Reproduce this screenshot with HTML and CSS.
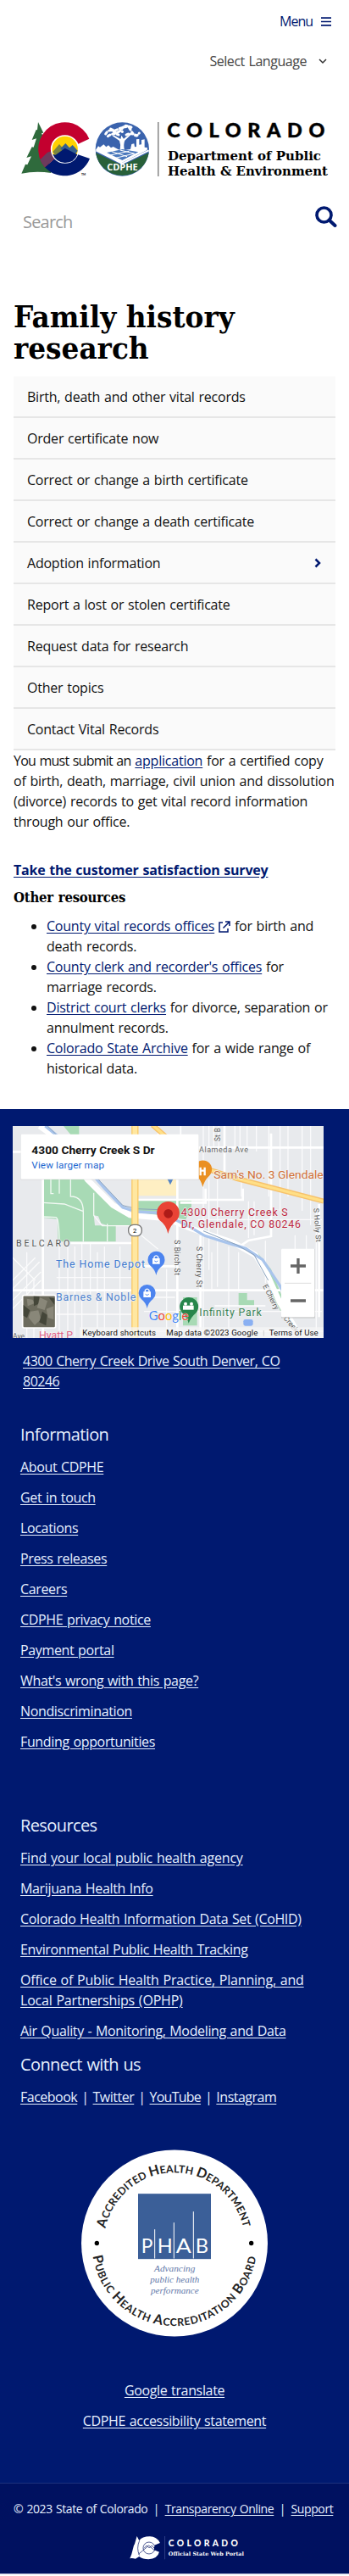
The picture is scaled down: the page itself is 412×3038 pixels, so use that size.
FILE: index.html
```html
<!DOCTYPE html>
<html lang="en">
<head>
<meta charset="utf-8">
<meta name="viewport" content="width=device-width, initial-scale=1">
<title>Family history research</title>
<link rel="stylesheet" href="styles.css">
</head>
<body>
<header class="site-header">
  <a class="menu">Menu
    <svg width="12" height="11" viewBox="0 0 12 11"><path d="M0 1.2h12M0 5.5h12M0 9.8h12" stroke="#001970" stroke-width="1.7"/></svg>
  </a>
  <div class="language">Select Language
    <svg width="10" height="7" viewBox="0 0 10 7"><path d="M1 1l4 4 4-4" fill="none" stroke="#333" stroke-width="1.5"/></svg>
  </div>
  <svg class="logo" viewBox="75 432 1092 192">
    <path fill="#2f6a3c" d="M135 432l19 38-7 1 14 30 20 111q-55-8-105 2l14-33 7 2 14-30-17 5 19-38 6 1 10-31-16 5 15-36 4 1z"/>
    <path fill="#001970" d="M230 528L159 592A96 96 0 0 0 318 561L272 545z"/>
    <path fill="#c3002f" d="M316 491A94 96 0 1 0 159 592L230 528 274 511z"/>
    <path fill="#6d3a5d" d="M142 565l26-26 16-5q3 14 12 24l-37 34q-12-14-17-27z"/>
    <circle cx="230" cy="528" r="48" fill="#ffd100" stroke="#fff" stroke-width="5"/>
    <path fill="#7a8540" d="M187 537l23-27 24 28-28 24z"/>
    <path fill="#35608f" d="M214 526l18-19 14 16 11-10 18 20-8 13-40-8z"/>
    <path fill="#001970" d="M187 545l10 3 33-24 44 23q-11 29-44 29-33-3-43-31z"/>
    <text x="288" y="620" font-family="Lato" font-size="10" font-weight="700">TM</text>
    <circle cx="433" cy="528" r="95" fill="#3a63ad"/>
    <path fill="#286039" d="M339 540l94 45 94-45a95 95 0 0 1-188 0z"/>
    <path fill="#fff" d="M339 530l9-13 6 4 13-10 9 9 8-6 9 9 8-4 18 10 6 1q4-17-2-32l-25-17 4-3 25 14 3-13 8 12 28-22 3 3-27 25q-6 15-1 34l21-3 4-18 9-2 2 12 6-1v-26l10-1v20l8-1v-16l11-2v28l10 2-1 8-94 47z"/>
    <path fill="#4a78bd" d="M378 540l56-12 56 10-57 29z"/>
    <path fill="none" stroke="#fff" stroke-width="3" d="M385 550l72-15M405 560l72-17M395 536l55 18M425 531l50 12"/>
    <path fill="none" stroke="#fff" stroke-width="6" d="M340 532l93 47 94-47"/>
    <path fill="none" stroke="#fff" stroke-width="9" stroke-linecap="round" stroke-dasharray="8 9" d="M374 474q12-20 28-9t31-11 31 8 29 9M382 482q20-14 38-5M447 477q20-9 38 3M392 456q14 8 22 3t29-10 28 8"/>
    <circle cx="433" cy="466" r="5" fill="#fff"/>
    <text x="379" y="603" font-family="Open Sans" font-size="30" font-weight="700" fill="#fff" textLength="109" lengthAdjust="spacingAndGlyphs">CDPHE</text>
    <path d="M560.500 432v192" stroke="#777" stroke-width="4"/>
    <text class="wordmark" x="592" y="485" font-size="70" textLength="558">COLORADO</text>
    <text class="slab" x="594" y="568" font-size="47" textLength="543" lengthAdjust="spacingAndGlyphs">Department of Public</text>
    <text class="slab" x="594" y="622" font-size="47" textLength="567" lengthAdjust="spacingAndGlyphs">Health &amp; Environment</text>
  </svg>
  <div class="search"><span>Search</span>
    <svg width="26" height="25" viewBox="0 0 26 25"><circle cx="10.500" cy="10.500" r="8.500" fill="none" stroke="#001970" stroke-width="3.600"/><path d="M16.500 16.500l7 6.500" stroke="#001970" stroke-width="4" stroke-linecap="round"/></svg>
  </div>
</header>
<main>
  <h1>Family history<br>research</h1>
  <nav class="side-nav">
    <a>Birth, death and other vital records</a>
    <a>Order certificate now</a>
    <a>Correct or change a birth certificate</a>
    <a>Correct or change a death certificate</a>
    <a>Adoption information <svg width="8" height="12" viewBox="0 0 8 12"><path d="M1.500 1.500L6 6l-4.500 4.500" fill="none" stroke="#001970" stroke-width="2.500"/></svg></a>
    <a>Report a lost or stolen certificate</a>
    <a>Request data for research</a>
    <a>Other topics</a>
    <a>Contact Vital Records</a>
  </nav>
  <p class="intro"><span class="snug">You must submit an</span> <a>application</a> for a certified copy<br>of birth, death, marriage, civil union and dissolution<br>(divorce) records to get vital record information<br>through our office.</p>
  <p class="survey"><a>Take the customer satisfaction survey</a></p>
  <h2>Other resources</h2>
  <ul class="resources">
    <li><a>County vital records offices</a> <svg width="14" height="14" viewBox="0 0 14 14"><path d="M5 2H1v11h10V9M8 1h5v5M13 1L5.500 8.500" fill="none" stroke="#001970" stroke-width="1.500"/></svg> for birth and<br>death records.</li>
    <li><a>County clerk and recorder's offices</a> for<br>marriage records.</li>
    <li><a>District court clerks</a> for divorce, separation or<br>annulment records.</li>
    <li><a>Colorado State Archive</a> for a wide range of<br>historical data.</li>
  </ul>
</main>
<footer class="site-footer">
  <svg class="map" viewBox="45 54 1101 750">
    <rect x="45" y="54" width="1101" height="750" fill="#e8eaed"/>
    <g fill="#a8dab5">
      <path d="M150 243h170l20 30 70 70 60 40v22h-60v58H205v-80l-55-5zM225 54h55v30h-30zM480 318h198v22l-20 45-80-12-98-15zM845 645h30v25h25v20h-55zM648 660h50v100h-50zM910 500l50 60 40 100-6 50-30-60-20-90z"/>
    </g>
    <path fill="#feefc3" d="M487 243h140v58H487z"/>
    <path fill="#e8eaed" d="M332 370l16 3 10 25 22 8h-44z"/>
    <g fill="none" stroke="#fff" stroke-width="4" opacity=".85">
      <path d="M720 54v750M740 54v90M757 54v90M775 54v90M832 54v90M850 54v90M875 54v90M908 54v90M952 54v250M992 54v300M1020 54v250M1070 54v300M1100 54v350M740 243v320M770 243v380M855 243v60M880 320v130M900 320v120M750 500v130M810 480v320M845 500v140M1045 440v50M1085 440v50M1120 350v450M940 460v150M210 480v320M240 480v320M265 480v320M290 470v334M320 470v180M345 500v304M370 480v324M425 480v324M590 560v240M95 500v304M120 600v204M380 400v62M180 243v50h10M210 243v50M250 243v60q45 0 45 55v105M153 325l75 5 65 25M153 375l45 2q12 3 12 90M332 290v80l30 37h110"/>
      <path d="M45 600l80-80M45 630l95-95M45 670l100-100M45 700l100-100M45 520l80 80M200 720h270M200 590h270M500 440l60 50M510 710h120M700 710h440M700 385h440M500 660h120"/>
    </g>
    <g fill="none" stroke="#fff" stroke-width="8">
      <path d="M250 468h230M45 635h1100M480 315h380v-40M628 243v560M960 80v364l-80 15-30 20M795 54v190M710 440v364M728 275v50h-90M152 243v561M45 145h30M700 130h446M490 550h130M1130 330v400"/>
      <path d="M545 780h600M760 690h180M560 54v30M640 54v30" stroke-width="5"/>
    </g>
    <path fill="none" stroke="#fff" stroke-width="20" d="M140 54l70 50 100 140 90 90 60 35 130 12 85 35 150 50 80 45 40 65 45 100 60 100"/>
    <path fill="none" stroke="#a8c4ec" stroke-width="10" d="M160 54l50 40 90 100 70 80 65 68 50 15 90 5 90 45 60 35 145 45 60 40 60 90 60 110"/>
    <path fill="none" stroke="#8aa2bd" stroke-width="3" d="M165 50l150 150 40 50 80 85 50 12 80 3M720 425l120 50 60 35 50 90"/>
    <path fill="none" stroke="#f9ca69" stroke-width="25" d="M478 54v750"/>
    <path fill="none" stroke="#ffe7a0" stroke-width="17" d="M478 54v750"/>
    <path fill="none" stroke="#f7c26b" stroke-width="18" d="M540 50l48 42M740 208l100 32 306 80"/>
    <path fill="none" stroke="#ffdf86" stroke-width="10" d="M540 50l48 42M740 208l100 32 306 80"/>
    <rect x="455" y="403" width="47" height="40" rx="18" fill="#fff" stroke="#777" stroke-width="4"/>
    <text x="471" y="432" font-size="23">2</text>
    <g class="halo">
      <text x="705" y="146" font-size="27" fill="#666" textLength="174">Alameda Ave</text>
      <text x="57" y="481" font-size="32" fill="#555" textLength="190">BELCARO</text>
      <text transform="translate(781 108) rotate(-90)" font-size="25" fill="#555">St</text>
      <text transform="translate(781 76) rotate(-90)" font-size="25" fill="#555">B</text>
      <text transform="translate(618 457) rotate(90)" font-size="26" fill="#555" textLength="125">S Birch St</text>
      <text transform="translate(696 480) rotate(90)" font-size="26" fill="#555" textLength="145">S Cherry St</text>
      <text transform="translate(1111 345) rotate(86)" font-size="26" fill="#555" textLength="120">S Holly St</text>
      <text transform="translate(930 620) rotate(63)" font-size="26" fill="#555">E Cherry</text>
      <text transform="translate(1003 735) rotate(50)" font-size="26" fill="#555">Creek</text>
      <text x="757" y="240" font-size="37" fill="#d17036" textLength="388" lengthAdjust="spacingAndGlyphs">Sam's No. 3 Glendale</text>
      <text x="641" y="372" font-size="37" fill="#bd2740" textLength="378">4300 Cherry Creek S</text>
      <text x="641" y="415" font-size="37" fill="#bd2740" textLength="424">Dr, Glendale, CO 80246</text>
      <text x="198" y="555" font-size="37" fill="#3d78cf" textLength="315">The Home Depot</text>
      <text x="198" y="672" font-size="37" fill="#4f82cf" textLength="283">Barnes &amp; Noble</text>
      <text x="706" y="725" font-size="37" fill="#3b8456" textLength="220">Infinity Park</text>
      <text x="138" y="807" font-size="37" fill="#df6287">Hyatt P</text>
      <text x="45" y="808" font-size="26" fill="#666">Ave</text>
    </g>
    <path fill="#ea9022" d="M718 270q-5-24-22-40a32 32 0 1 1 45 0q-18 17-23 40z"/>
    <path stroke="#fff" stroke-width="7" d="M710 200v29M725 200v29M710 212h15"/>
    <path fill="#5484c5" d="M592 240h22l-11 22z"/>
    <path fill="#e94335" d="M595 435q-6-31-30-48a40 40 0 1 1 61 0q-25 19-31 48z"/><circle cx="596" cy="364" r="16" fill="#ad1b18"/>
    <path fill="#4c84ef" d="M553 582q-5-21-19-32a30 30 0 1 1 39 0q-15 11-20 32zM521 699q-5-21-20-32a30 30 0 1 1 40 0q-15 11-20 32z"/>
    <path fill="#fff" d="M540 522h26v20h-26zM508 640h26v20h-26z"/><path fill="none" stroke="#fff" stroke-width="4" d="M546 524v-7q7-9 14 0v7M514 642v-7q7-9 14 0v7"/>
    <path fill="none" stroke="#4c84ef" stroke-width="3" d="M547 531q6 7 12 0M515 649q6 7 12 0"/>
    <path fill="#27864b" d="M668 752q-4-17-20-34a33 33 0 1 1 45-2q-17 14-25 36z"/><path fill="#fff" d="M648 689h38v15h-38z"/><circle cx="657" cy="683" r="6" fill="#fff"/><circle cx="678" cy="683" r="6" fill="#fff"/>
    <rect x="862" y="738" width="34" height="23" rx="7" fill="#8ab0f2"/>
    <text class="google" x="527" y="740" font-size="44" textLength="140" lengthAdjust="spacingAndGlyphs"><tspan fill="#4285f4">G</tspan><tspan fill="#ea4335">o</tspan><tspan fill="#fbbc04">o</tspan><tspan fill="#4285f4">g</tspan><tspan fill="#34a853">l</tspan><tspan fill="#ea4335">e</tspan></text>
    <rect x="74" y="84" width="631" height="160" fill="#bbb" opacity=".5"/>
    <rect x="74" y="83" width="630" height="159" rx="3" fill="#fff"/>
    <text x="112" y="152" font-size="41" font-weight="700" fill="#111" textLength="436" lengthAdjust="spacingAndGlyphs">4300 Cherry Creek S Dr</text>
    <text x="112" y="203" font-size="35" fill="#1a66cf" textLength="257">View larger map</text>
    <rect x="80" y="653" width="117" height="115" rx="5" fill="#6c6b5d" stroke="#fff" stroke-width="5"/>
    <path fill="#898779" d="M95 665l20 3 8 13-25 10zM142 661l26 12-10 32-27-8zM164 701l26-10v48l-20-7zM108 710l28-4 9 32-22 20-22-26z"/>
    <path fill="#444639" d="M83 687l23 19-10 27-13-8zM119 656l21 1-5 27-15 7zM150 710l17 12-4 38-24-12zM173 661l20 3v22z"/>
    <rect x="996" y="490" width="120" height="244" fill="#bbb" opacity=".6"/><rect x="996" y="488" width="118" height="242" rx="4" fill="#fff"/>
    <path d="M1008 610h94" stroke="#ddd" stroke-width="3"/>
    <path fill="none" stroke="#666" stroke-width="10" d="M1029 549h54M1056 522v54M1029 672h54"/>
    <path fill="#f5f5f5" opacity=".75" d="M282 766h864v38H282z"/>
    <text x="292" y="794" font-size="29" fill="#111" textLength="260">Keyboard shortcuts</text><text x="589" y="794" font-size="29" fill="#111" textLength="324">Map data ©2023 Google</text><text x="953" y="794" font-size="29" fill="#111" textLength="174">Terms of Use</text>
    <path d="M934 777v20" stroke="#bbb" stroke-width="2"/>
  </svg>
  <p class="address"><a>4300 Cherry Creek Drive South Denver, CO<br>80246</a></p>
  <section class="links information">
    <h3>Information</h3>
    <a>About CDPHE</a><a>Get in touch</a><a>Locations</a><a>Press releases</a><a>Careers</a><a>CDPHE privacy notice</a><a>Payment portal</a><a>What's wrong with this page?</a><a>Nondiscrimination</a><a>Funding opportunities</a>
  </section>
  <section class="links">
    <h3>Resources</h3>
    <a class="roomy">Find your local public health agency</a><a>Marijuana Health Info</a><a>Colorado Health Information Data Set (CoHID)</a><a>Environmental Public Health Tracking</a><a class="roomy">Office of Public Health Practice, Planning, and<br>Local Partnerships (OPHP)</a><a>Air Quality - Monitoring, Modeling and Data</a>
  </section>
  <section class="links connect">
    <h3>Connect with us</h3>
    <p class="social"><a>Facebook</a><span>|</span><a>Twitter</a><span>|</span><a class="snug">YouTube</a><span>|</span><a>Instagram</a></p>
  </section>
  <svg class="seal" viewBox="288 108 660 662">
    <defs><path id="seal-top" d="M373.500 387A250 250 0 0 1 862.500 387"/><path id="seal-bottom" d="M328.600 484.800A293 293 0 0 0 907.400 484.800"/></defs>
    <circle cx="618" cy="439" r="330" fill="#fff"/>
    <g class="seal-ring">
      <text textLength="676"><textPath href="#seal-top"><tspan class="cap">A</tspan>CCREDITED <tspan class="cap">H</tspan>EALTH <tspan class="cap">D</tspan>EPARTMENT</textPath></text>
      <text textLength="824"><textPath href="#seal-bottom"><tspan class="cap">P</tspan>UBLIC <tspan class="cap">H</tspan>EALTH <tspan class="cap">A</tspan>CCREDITATION <tspan class="cap">B</tspan>OARD</textPath></text>
    </g>
    <circle cx="343" cy="439" r="8"/><circle cx="890" cy="439" r="8"/>
    <rect x="489" y="264" width="258" height="231" fill="#3b5f98"/>
    <path d="M548 390v103M616 366v127M685 327v166" stroke="#fff" stroke-width="3"/>
    <g font-family="Lato" font-size="72" fill="#fff"><text x="500" y="475" textLength="41" lengthAdjust="spacingAndGlyphs">P</text><text x="557" y="475" textLength="54" lengthAdjust="spacingAndGlyphs">H</text><text x="623" y="475" textLength="54" lengthAdjust="spacingAndGlyphs">A</text><text x="692" y="475" textLength="46" lengthAdjust="spacingAndGlyphs">B</text></g>
    <g class="motto"><text x="546" y="541" textLength="145" lengthAdjust="spacingAndGlyphs">Advancing</text><text x="532" y="580" textLength="174" lengthAdjust="spacingAndGlyphs">public health</text><text x="534" y="619" textLength="170" lengthAdjust="spacingAndGlyphs">performance</text></g>
  </svg>
  <div class="policies"><a>Google translate</a><a>CDPHE accessibility statement</a></div>
  <div class="legal">
    <p><span>© 2023 State of Colorado</span><span>|</span><a>Transparency Online</a><span>|</span><a>Support</a></p>
    <svg class="portal-logo" viewBox="455 665 412 84">
      <path fill="#fff" d="M484 665l8 16q10-15 38-15 24 0 36 23l-20 8 5 12 14 8q-8 30-40 30-20 0-33-10l-13 8q-12-3-20-1l6-15 8-31 3-5z"/>
      <path fill="#001160" d="M567 691l-22 13v10l22 9z"/>
      <circle cx="527" cy="707" r="21" fill="none" stroke="#001160" stroke-width="2"/>
      <path fill="none" stroke="#001160" stroke-width="2" d="M489 729l16-13 21-18 21 18M509 708l10-10 9 9 9-9 8 9M493 681q-12 27 0 52"/>
      <path d="M583 665v82" stroke="#44549a" stroke-width="2"/>
      <text class="wordmark light" x="596" y="700" font-size="31" textLength="246">COLORADO</text>
      <text class="slab light" x="596" y="735" font-size="19" textLength="268" lengthAdjust="spacingAndGlyphs">Official State Web Portal</text>
    </svg>
  </div>
</footer>
</body>
</html>
```
FILE: styles.css
```css
* { box-sizing: border-box; }
body { margin: 0; background: #fff; color: #111; font: 16px/24px "Open Sans", sans-serif; letter-spacing: -0.22px; word-spacing: 0.9px; white-space: nowrap; overflow-x: hidden; }
p, h1, h2, h3, ul { margin: 0; }
svg { display: block; flex: none; }
svg text { word-spacing: 0; }
a { text-underline-offset: 2px; }

.site-header { height: 349px; padding-top: 13px; }
.menu, .language { display: flex; justify-content: flex-end; align-items: center; height: 24px; }
.menu { gap: 10px; padding-right: 21px; color: #001970; letter-spacing: -1px; }
.language { gap: 14px; margin-top: 23px; padding-right: 26px; color: #444; letter-spacing: -0.45px; }
.logo { width: 364px; height: 64px; margin: 60px 0 0 25px; overflow: visible; }
.wordmark { font-family: Lato, sans-serif; font-weight: 900; stroke: currentColor; stroke-width: 1.5px; }
.slab { font-family: "DejaVu Serif", serif; font-weight: 700; letter-spacing: 0; }
.light { fill: #fff; stroke: none; }
.search { display: flex; justify-content: space-between; margin-top: 35px; padding: 0 14px 0 27px; font-size: 20px; line-height: 30px; color: #999; letter-spacing: -0.8px; }
.search span { padding-top: 4px; }

h1 { margin: 6px 16px 15px; color: #000; font: 700 36px/37px "DejaVu Serif", serif; letter-spacing: 0; word-spacing: 0; transform: scaleX(.91); transform-origin: left; }
.side-nav { margin: 0 16px; background: #fafafa; }
.side-nav a { display: flex; justify-content: space-between; align-items: center; height: 49px; padding: 0 17px 0 16px; border-bottom: 2px solid #e6e6e6; }
.intro { padding-left: 16px; }
.intro a, .survey a, .resources a { color: #001970; text-decoration: underline; }
.snug { letter-spacing: -0.75px; }
.survey { margin: 33px 0 0 16px; font-weight: 700; }
h2 { margin: 9px 0 9px 16px; color: #000; font: 700 16px/24px "DejaVu Serif", serif; transform: scaleX(.93); transform-origin: left; }
.resources { padding-left: 55px; height: 228px; }
.resources svg { display: inline-block; vertical-align: -2px; }

.site-footer { padding-top: 20px; background: #001970; color: #e6f0ff; letter-spacing: -0.35px; }
.site-footer a { text-decoration: underline; }
.map { width: 367px; height: 250px; margin-left: 15px; font-family: Roboto, sans-serif; letter-spacing: 0; }
.halo text { paint-order: stroke; stroke: #f1f3f4; stroke-width: 4px; }
.google { font-family: Lato, sans-serif; stroke: #fff; stroke-width: 2px; paint-order: stroke; }
.address { margin: 15px 0 0 27px; letter-spacing: -0.5px; }
.links { display: flex; flex-direction: column; align-items: flex-start; gap: 12px; padding-left: 24px; }
.roomy { letter-spacing: -0.2px; }
h3 { font-size: 20px; line-height: 28px; font-weight: 400; letter-spacing: -0.6px; }
.information { margin: 37px 0 73px; }
.connect { margin-top: 14px; }
.social { display: flex; gap: 5px; letter-spacing: -0.5px; }
.seal { width: 220px; height: 221px; margin: 50px auto 0; letter-spacing: 0; }
.seal-ring { font-family: Lato, sans-serif; font-size: 37px; font-weight: 700; fill: #222; }
.cap { font-size: 48px; }
.motto { font-family: "Liberation Serif", serif; font-size: 33px; font-style: italic; fill: #6379aa; }
.policies { display: flex; flex-direction: column; align-items: center; gap: 12px; margin-top: 51px; }
.legal { height: 108px; margin-top: 61px; padding-top: 20px; background: #001160; border-top: 1px solid #1c317c; border-bottom: 1px solid #b3bbd8; }
.legal p { display: flex; gap: 6.5px; padding-left: 16px; font-size: 14px; line-height: 20px; letter-spacing: -0.4px; }
.portal-logo { width: 137px; height: 28px; margin: 22px 0 0 152px; }
```
